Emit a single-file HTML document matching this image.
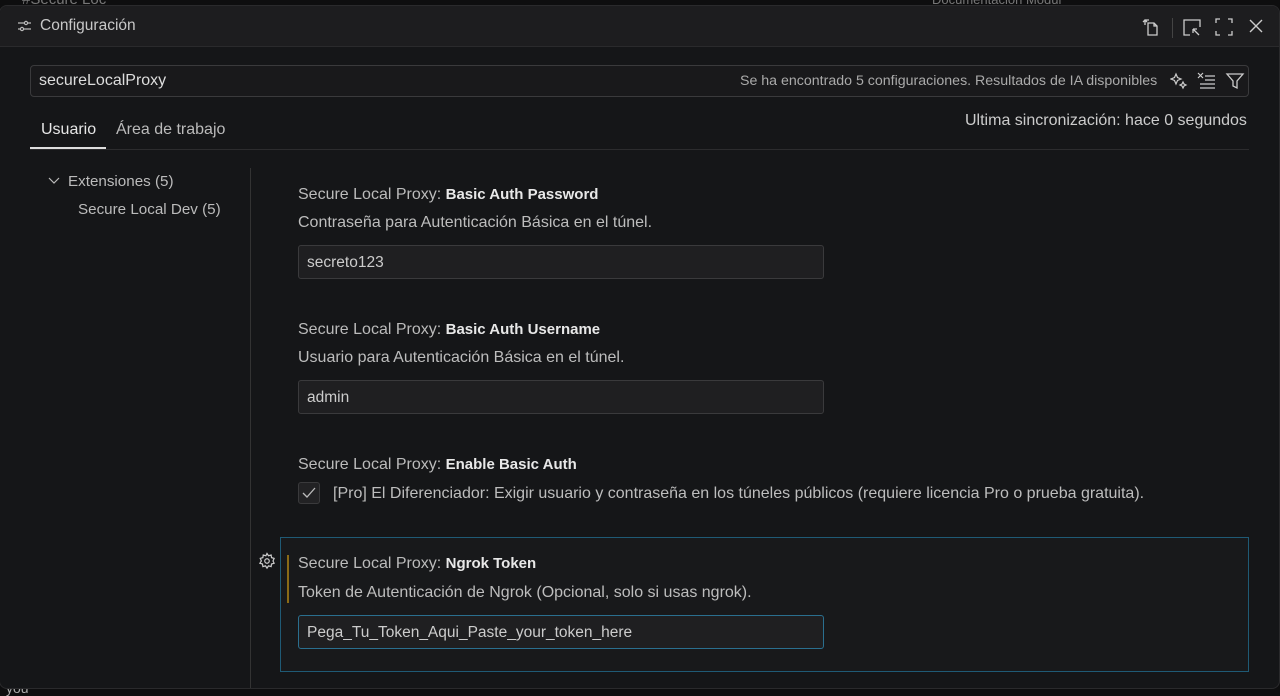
<!DOCTYPE html>
<html><head><meta charset="utf-8"><style>
*{box-sizing:border-box;margin:0;padding:0}
body{width:1280px;height:694px;background:#0e0e0f;font-family:"Liberation Sans",sans-serif;color:#ccc;position:relative;overflow:hidden}
.bgtxt{position:absolute;font-size:15px;color:#777}
.dlg{position:absolute;left:-1px;top:5px;width:1281px;height:684px;background:#151618;border:1px solid #2a2a2c;border-radius:8px;overflow:hidden}
.title{height:41px;background:#1d1d1f;border-bottom:1px solid #2a2a2c;position:relative}
.abs{position:absolute}
.search{position:absolute;left:30px;top:59px;width:1219px;height:32px;border:1px solid #3a3a3c;border-radius:4px;background:#19191b}
.lbl{font-size:16px;color:#bbb}
.lbl b{color:#e8e8e8;font-weight:bold;font-size:15px}
.desc{font-size:16px;color:#bdbdbd}
.inp{position:absolute;left:298px;width:526px;height:34px;background:#1f1f21;border:1px solid #3a3a3c;border-radius:3px;font-size:15.5px;color:#ccc;padding:8px 8px}
</style></head><body>
<div class="bgtxt" style="left:22px;top:-9px">#Secure Loc</div>
<div class="bgtxt" style="left:932px;top:-8px;font-size:13px">Documentacion   Modul</div>
<div class="bgtxt" style="left:6px;top:680px;font-size:14px;color:#aaa">you</div>
<div class="dlg">
 <div class="title">
  <svg class="abs" style="left:17px;top:13px" width="15" height="14" viewBox="0 0 15 14" fill="none" stroke="#bbb" stroke-width="1.2"><path d="M1 4h13M1 10h13"/><circle cx="9" cy="4" r="1.6" fill="#1d1d1f"/><circle cx="5" cy="10" r="1.6" fill="#1d1d1f"/></svg>
  <div class="abs" style="left:40px;top:11px;font-size:15.5px;color:#c8c8c8">Configuración</div>
  <svg class="abs" style="left:1141px;top:11px" width="20" height="20" viewBox="0 0 20 20" fill="none" stroke="#ccc" stroke-width="1.3"><path d="M7 6h6l3 3v9H7z M13 6v3h3 M4 8V3h4 M2 5l2-2 2 2"/></svg>
  <div class="abs" style="left:1172px;top:12px;width:1px;height:20px;background:#444"></div>
  <svg class="abs" style="left:1182px;top:12px" width="20" height="20" viewBox="0 0 20 20" fill="none" stroke="#ccc" stroke-width="1.3"><path d="M8 17H2V2h16v7 M11 11l6 6 M11 11h4 M11 11v4"/></svg>
  <svg class="abs" style="left:1215px;top:12px" width="18" height="18" viewBox="0 0 18 18" fill="none" stroke="#ccc" stroke-width="1.3"><path d="M1 5V1h4 M13 1h4v4 M17 13v4h-4 M5 17H1v-4"/></svg>
  <svg class="abs" style="left:1249px;top:13px" width="14" height="14" viewBox="0 0 14 14" stroke="#ccc" stroke-width="1.4"><path d="M1 1l12 12M13 1L1 13"/></svg>
 </div>
 <div class="search">
  <div class="abs" style="left:8px;top:6px;font-size:16px;color:#ddd">secureLocalProxy</div>
  <div class="abs" style="left:709px;top:7px;font-size:14.2px;color:#aaa">Se ha encontrado 5 configuraciones. Resultados de IA disponibles</div>
  <svg class="abs" style="left:1139px;top:6px" width="18" height="18" viewBox="0 0 18 18" fill="none" stroke="#ccc" stroke-width="1.2"><path d="M6 2l1.5 3.5L11 7 7.5 8.5 6 12 4.5 8.5 1 7l3.5-1.5z M13 10l1 2 2 1-2 1-1 2-1-2-2-1 2-1z"/></svg>
  <svg class="abs" style="left:1166px;top:6px" width="20" height="18" viewBox="0 0 20 18" fill="none" stroke="#ccc" stroke-width="1.2"><path d="M1 1l5 5M6 1L1 6 M8 4h10 M8 8h10 M3 12h15 M3 16h15"/></svg>
  <svg class="abs" style="left:1194px;top:5px" width="20" height="20" viewBox="0 0 20 20" fill="none" stroke="#ccc" stroke-width="1.3"><path d="M2 3h16l-6 7v7l-4-2v-5z"/></svg>
 </div>
 <div class="abs" style="left:41px;top:115px;font-size:16px;color:#e6e6e6">Usuario</div>
 <div class="abs" style="left:30px;top:141px;width:76px;height:2px;background:#ddd"></div>
 <div class="abs" style="left:116px;top:115px;font-size:16px;color:#bbb">Área de trabajo</div>
 <div class="abs" style="left:965px;top:106px;font-size:16px;color:#ccc">Ultima sincronización: hace 0 segundos</div>
 <div class="abs" style="left:30px;top:143px;width:1219px;height:1px;background:#2c2c2e"></div>
 <svg class="abs" style="left:48px;top:171px" width="12" height="8" viewBox="0 0 12 8" fill="none" stroke="#bbb" stroke-width="1.2"><path d="M1 1l5 5 5-5"/></svg>
 <div class="abs" style="left:68px;top:167px;font-size:15.2px;color:#bbb">Extensiones (5)</div>
 <div class="abs" style="left:78px;top:195px;font-size:15.2px;color:#bbb">Secure Local Dev (5)</div>
 <div class="abs" style="left:250px;top:162px;width:1px;height:520px;background:#333"></div>

 <div class="abs lbl" style="left:298px;top:180px">Secure Local Proxy: <b>Basic Auth Password</b></div>
 <div class="abs desc" style="left:298px;top:208px">Contraseña para Autenticación Básica en el túnel.</div>
 <div class="inp" style="top:239px">secreto123</div>

 <div class="abs lbl" style="left:298px;top:315px">Secure Local Proxy: <b>Basic Auth Username</b></div>
 <div class="abs desc" style="left:298px;top:343px">Usuario para Autenticación Básica en el túnel.</div>
 <div class="inp" style="top:374px">admin</div>

 <div class="abs lbl" style="left:298px;top:450px">Secure Local Proxy: <b>Enable Basic Auth</b></div>
 <div class="abs" style="left:298px;top:476px;width:22px;height:22px;border:1px solid #3a3a3c;border-radius:3px;background:#222224"></div>
 <svg class="abs" style="left:302px;top:481px" width="14" height="12" viewBox="0 0 14 12" fill="none" stroke="#bbb" stroke-width="1.3"><path d="M1 6l4 4 8-9"/></svg>
 <div class="abs desc" style="left:333px;top:479px">[Pro] El Diferenciador: Exigir usuario y contraseña en los túneles públicos (requiere licencia Pro o prueba gratuita).</div>

 <div class="abs" style="left:280px;top:531px;width:969px;height:135px;border:1px solid #1f5a75;background:#18191b"></div>
 <div class="abs" style="left:287px;top:549px;width:2px;height:48px;background:#8a6a16"></div>
 <svg class="abs" style="left:258px;top:546px" width="18" height="18" viewBox="0 0 24 24" fill="none" stroke="#ccc" stroke-width="1.6"><circle cx="12" cy="12" r="3"/><path d="M12 2l2 3 3.5-1 .5 3.5 3.5 1-1.5 3.5 1.5 3-3.5 1-.5 3.5-3.5-1-2 3-2-3-3.5 1-.5-3.5-3.5-1L4.5 12 3 8.5l3.5-1L7 4l3.5 1z"/></svg>
 <div class="abs lbl" style="left:298px;top:549px">Secure Local Proxy: <b>Ngrok Token</b></div>
 <div class="abs desc" style="left:298px;top:578px">Token de Autenticación de Ngrok (Opcional, solo si usas ngrok).</div>
 <div class="inp" style="top:609px;border-color:#2a6f8f">Pega_Tu_Token_Aqui_Paste_your_token_here</div>
</div>
</body></html>
